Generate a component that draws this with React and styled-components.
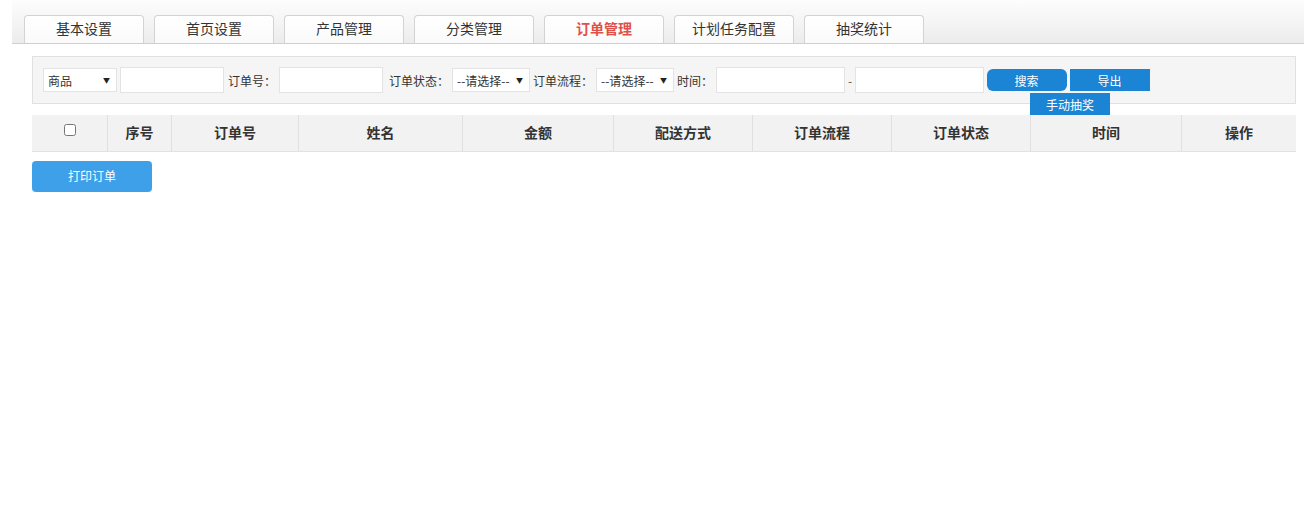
import React from 'react'
import styled, { createGlobalStyle } from 'styled-components';

const GlobalStyle = createGlobalStyle`
	body {
		margin: 0;
		background: #fff;
		font-family: "Noto Sans CJK SC", "Noto Sans", sans-serif;
		color: #333;
	}
`;

export default function App() {

	const tabs = ['基本设置', '首页设置', '产品管理', '分类管理', '订单管理', '计划任务配置', '抽奖统计'];
	const columns = [
		{ title: '序号', width: 64 },
		{ title: '订单号', width: 127 },
		{ title: '姓名', width: 164 },
		{ title: '金额', width: 151 },
		{ title: '配送方式', width: 139 },
		{ title: '订单流程', width: 139 },
		{ title: '订单状态', width: 139 },
		{ title: '时间', width: 151 },
		{ title: '操作', width: 114 },
	];

	return (
		<>
			<GlobalStyle />
			<TabBar>
				{tabs.map(tab => <Tab key={tab} active={tab === '订单管理'}>{tab}</Tab>)}
			</TabBar>
			<Content>
				<FilterPanel>
					<Select width={74}>
						<span>商品</span>
						<Arrow>▼</Arrow>
					</Select>
					<Input width={104} />
					<Label gapLeft={1}>订单号：</Label>
					<Input width={104} />
					<Label gapLeft={3}>订单状态：</Label>
					<Select width={78}>
						<span>--请选择--</span>
						<Arrow>▼</Arrow>
					</Select>
					<Label>订单流程：</Label>
					<Select width={78}>
						<span>--请选择--</span>
						<Arrow>▼</Arrow>
					</Select>
					<Label>时间：</Label>
					<Input width={129} />
					<Dash>-</Dash>
					<Input width={129} />
					<ButtonGroup>
						<ActionButton rounded>搜索</ActionButton>
						<ActionButton>导出</ActionButton>
						<ActionButton>手动抽奖</ActionButton>
					</ButtonGroup>
				</FilterPanel>
				<HeaderRow>
					<HeaderCell width={76}><input type="checkbox" /></HeaderCell>
					{columns.map(col => <HeaderCell key={col.title} width={col.width}>{col.title}</HeaderCell>)}
				</HeaderRow>
				<PrintButton>打印订单</PrintButton>
			</Content>
		</>
	)
}

const TabBar = styled.div`
	margin-left: 12px;
	padding: 15px 0 0 12px;
	height: 28px;
	display: flex;
	gap: 10px;
	background: linear-gradient(#fdfdfd, #ececec);
	border-bottom: 1px solid #cfcfcf;
`;
const Tab = styled.div`
	flex-shrink: 0;
	width: 120px;
	height: 28px;
	box-sizing: border-box;
	padding-bottom: 3px;
	border: 1px solid #d3d3d3;
	border-bottom: none;
	border-radius: 4px 4px 0 0;
	background: linear-gradient(#fff, #fafafa);
	display: flex;
	align-items: center;
	justify-content: center;
	font-size: 14px;
	color: ${props => props.active ? '#e0504a' : '#333'};
	font-weight: ${props => props.active ? 'bold' : 'normal'};
`;
const Content = styled.div`
	padding: 12px 8px 0 32px;
`;
const FilterPanel = styled.div`
	height: 46px;
	border: 1px solid #e0e0e0;
	background: #f5f5f5;
	display: flex;
	align-items: center;
	gap: 3px;
	padding-left: 10px;
	font-size: 12px;
`;
const Select = styled.div`
	width: ${props => props.width}px;
	height: 24px;
	box-sizing: border-box;
	border: 1px solid #e3e3e3;
	background: #fff;
	display: flex;
	align-items: center;
	justify-content: space-between;
	padding: 0 6px 0 4px;
	font-size: 12px;
	color: #333;
	white-space: nowrap;
`;
const Arrow = styled.span`
	font-size: 7px;
	color: #222;
`;
const Input = styled.input`
	width: ${props => props.width}px;
	height: 26px;
	box-sizing: border-box;
	border: 1px solid #e3e3e3;
	background: #fff;
	outline: none;
	padding: 0 4px;
`;
const Label = styled.span`
	margin-left: ${props => props.gapLeft || 0}px;
	font-size: 12px;
	color: #333;
	white-space: nowrap;
`;
const Dash = styled.span`
	width: 4px;
	font-size: 12px;
	color: #555;
`;
const ButtonGroup = styled.div`
	width: 166px;
	height: 22px;
	margin-left: -2px;
	display: flex;
	flex-wrap: wrap;
	justify-content: center;
	column-gap: 3px;
	row-gap: 2px;
	align-self: flex-start;
	margin-top: 12px;
`;
const ActionButton = styled.div`
	width: 80px;
	height: 22px;
	background: #1b84d4;
	color: #fff;
	font-size: 12px;
	display: flex;
	align-items: center;
	justify-content: center;
	border-radius: ${props => props.rounded ? '6px' : '0'};
	&:last-child {
		position: relative;
		left: 2px;
	}
`;
const HeaderRow = styled.div`
	margin-top: 11px;
	display: flex;
	height: 36px;
	background: #f2f2f2;
	border-bottom: 1px solid #e2e2e2;
`;
const HeaderCell = styled.div`
	width: ${props => props.width}px;
	box-sizing: border-box;
	padding-bottom: 2px;
	display: flex;
	align-items: center;
	justify-content: center;
	font-size: 14px;
	font-weight: bold;
	color: #333;
	border-right: 1px solid #e0e0e0;
	&:last-child {
		border-right: none;
	}
	input {
		margin: 0 0 4px 0;
		width: 12px;
		height: 12px;
	}
`;
const PrintButton = styled.div`
	margin-top: 9px;
	width: 120px;
	height: 31px;
	border-radius: 4px;
	background: #3da0e9;
	color: #fff;
	font-size: 12px;
	display: flex;
	align-items: center;
	justify-content: center;
	padding-bottom: 2px;
	box-sizing: border-box;
`;
